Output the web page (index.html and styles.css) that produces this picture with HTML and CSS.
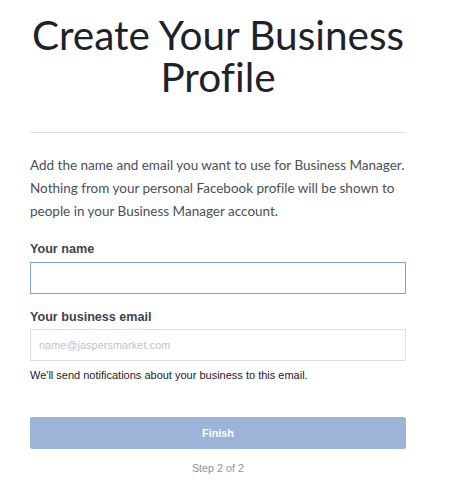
FILE: index.html
```html
<!DOCTYPE html>
<html lang="en">
<head>
<meta charset="utf-8">
<title>Create Your Business Profile</title>
<link rel="stylesheet" href="styles.css">
</head>
<body>
<main class="page">
  <h1 class="title">Create Your Business Profile</h1>
  <hr class="rule">
  <p class="intro">Add the name and email you want to use for Business Manager. Nothing from your personal Facebook profile will be shown to people in your Business Manager account.</p>
  <form class="form">
    <label class="label label-name" for="name">Your name</label>
    <input class="input input-focus" id="name" type="text">
    <label class="label label-email" for="email">Your business email</label>
    <input class="input" id="email" type="email" placeholder="name@jaspersmarket.com">
    <p class="note">We'll send notifications about your business to this email.</p>
    <button class="finish" type="button">Finish</button>
    <p class="step">Step 2 of 2</p>
  </form>
</main>
</body>
</html>
```
FILE: styles.css
```css
html, body {
  margin: 0;
  padding: 0;
  background: #ffffff;
}
.page {
  width: 376px;
  margin-left: 30px;
  display: flex;
  flex-direction: column;
}
.title {
  margin: 14px -10px 0;
  font-family: Lato, "Open Sans", sans-serif;
  font-weight: 400;
  font-size: 40.5px;
  line-height: 42px;
  color: #1d2129;
  text-align: center;
  font-variant-ligatures: none;
}
.rule {
  margin: 34px 0 0;
  border: 0;
  height: 1px;
  background: #dddfe2;
}
.intro {
  margin: 21px 0 0;
  font-family: Lato, "Open Sans", sans-serif;
  font-size: 13.5px;
  line-height: 23px;
  color: #4b4f56;
  font-variant-ligatures: none;
}
.form {
  display: flex;
  flex-direction: column;
}
.label {
  font-family: "Liberation Sans", Arial, sans-serif;
  font-weight: 700;
  font-size: 12.6px;
  line-height: 14.5px;
  color: #40444b;
}
.label-name {
  margin-top: 19px;
  margin-bottom: 5px;
}
.label-email {
  margin-top: 16px;
  margin-bottom: 5px;
}
.input {
  box-sizing: border-box;
  height: 32px;
  width: 100%;
  margin: 0;
  padding: 0 8px;
  border: 1px solid #dddfe2;
  border-radius: 0;
  font-family: "Liberation Sans", Arial, sans-serif;
  font-size: 10.8px;
  letter-spacing: 0.1px;
  color: #1d2129;
  outline: none;
  background: #fff;
}
.input::placeholder {
  color: #bec3c9;
}
.input-focus {
  border-color: #7e9ce3;
}
.note {
  margin: 8px 0 0;
  font-family: "Liberation Sans", Arial, sans-serif;
  font-size: 11px;
  line-height: 12.4px;
  color: #1d2129;
}
.finish {
  margin-top: 36px;
  height: 32px;
  border: 0;
  border-radius: 2px;
  background: #9cb4d8;
  color: #ffffff;
  font-family: "Liberation Sans", Arial, sans-serif;
  font-weight: 700;
  font-size: 10.8px;
  padding: 0;
}
.step {
  margin: 13px 0 0;
  font-family: "Liberation Sans", Arial, sans-serif;
  font-size: 10.8px;
  line-height: 12.4px;
  color: #90949c;
  text-align: center;
}
```
